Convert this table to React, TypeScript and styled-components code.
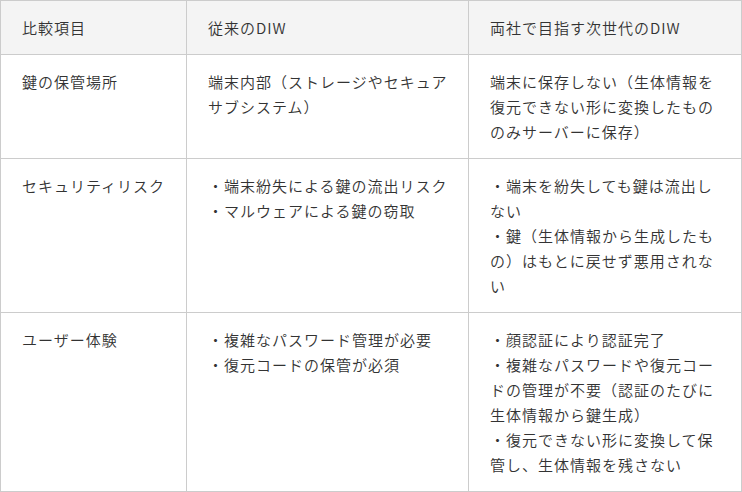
import React from "react";
import styled, { createGlobalStyle } from "styled-components";

const GlobalStyle = createGlobalStyle`
  html, body { margin: 0; padding: 0; background: #ffffff; }
  body {
    font-family: "Noto Sans CJK JP", "Noto Sans", sans-serif;
    color: #333333;
  }
`;

const Table = styled.div`
  display: grid;
  grid-template-columns: 186px 282px 273px;
  width: 742px;
  box-sizing: border-box;
  border-right: 1px solid #cccccc;
  border-bottom: 1px solid #cccccc;
`;

const Cell = styled.div<{ $head?: boolean }>`
  box-sizing: border-box;
  border-left: 1px solid #cccccc;
  border-top: 1px solid #cccccc;
  padding: 14px 18px 14px 21px;
  font-size: 15px;
  font-weight: 350;
  line-height: 25px;
  letter-spacing: 1px;
  background: ${(p) => (p.$head ? "#f4f4f4" : "#ffffff")};
  color: #333333;
`;

const Item = styled.div`
  display: block;
`;

type Row = { label: string; before: string[]; after: string[] };

const rows: Row[] = [
  {
    label: "鍵の保管場所",
    before: ["端末内部（ストレージやセキュアサブシステム）"],
    after: ["端末に保存しない（生体情報を復元できない形に変換したもののみサーバーに保存）"],
  },
  {
    label: "セキュリティリスク",
    before: ["・端末紛失による鍵の流出リスク", "・マルウェアによる鍵の窃取"],
    after: [
      "・端末を紛失しても鍵は流出しない",
      "・鍵（生体情報から生成したもの）はもとに戻せず悪用されない",
    ],
  },
  {
    label: "ユーザー体験",
    before: ["・複雑なパスワード管理が必要", "・復元コードの保管が必須"],
    after: [
      "・顔認証により認証完了",
      "・複雑なパスワードや復元コードの管理が不要（認証のたびに生体情報から鍵生成）",
      "・復元できない形に変換して保管し、生体情報を残さない",
    ],
  },
];

export default function App() {
  return (
    <>
      <GlobalStyle />
      <Table>
        <Cell $head>比較項目</Cell>
        <Cell $head>従来のDIW</Cell>
        <Cell $head>両社で目指す次世代のDIW</Cell>
        {rows.map((r) => (
          <React.Fragment key={r.label}>
            <Cell>{r.label}</Cell>
            <Cell>
              {r.before.map((t) => (
                <Item key={t}>{t}</Item>
              ))}
            </Cell>
            <Cell>
              {r.after.map((t) => (
                <Item key={t}>{t}</Item>
              ))}
            </Cell>
          </React.Fragment>
        ))}
      </Table>
    </>
  );
}
